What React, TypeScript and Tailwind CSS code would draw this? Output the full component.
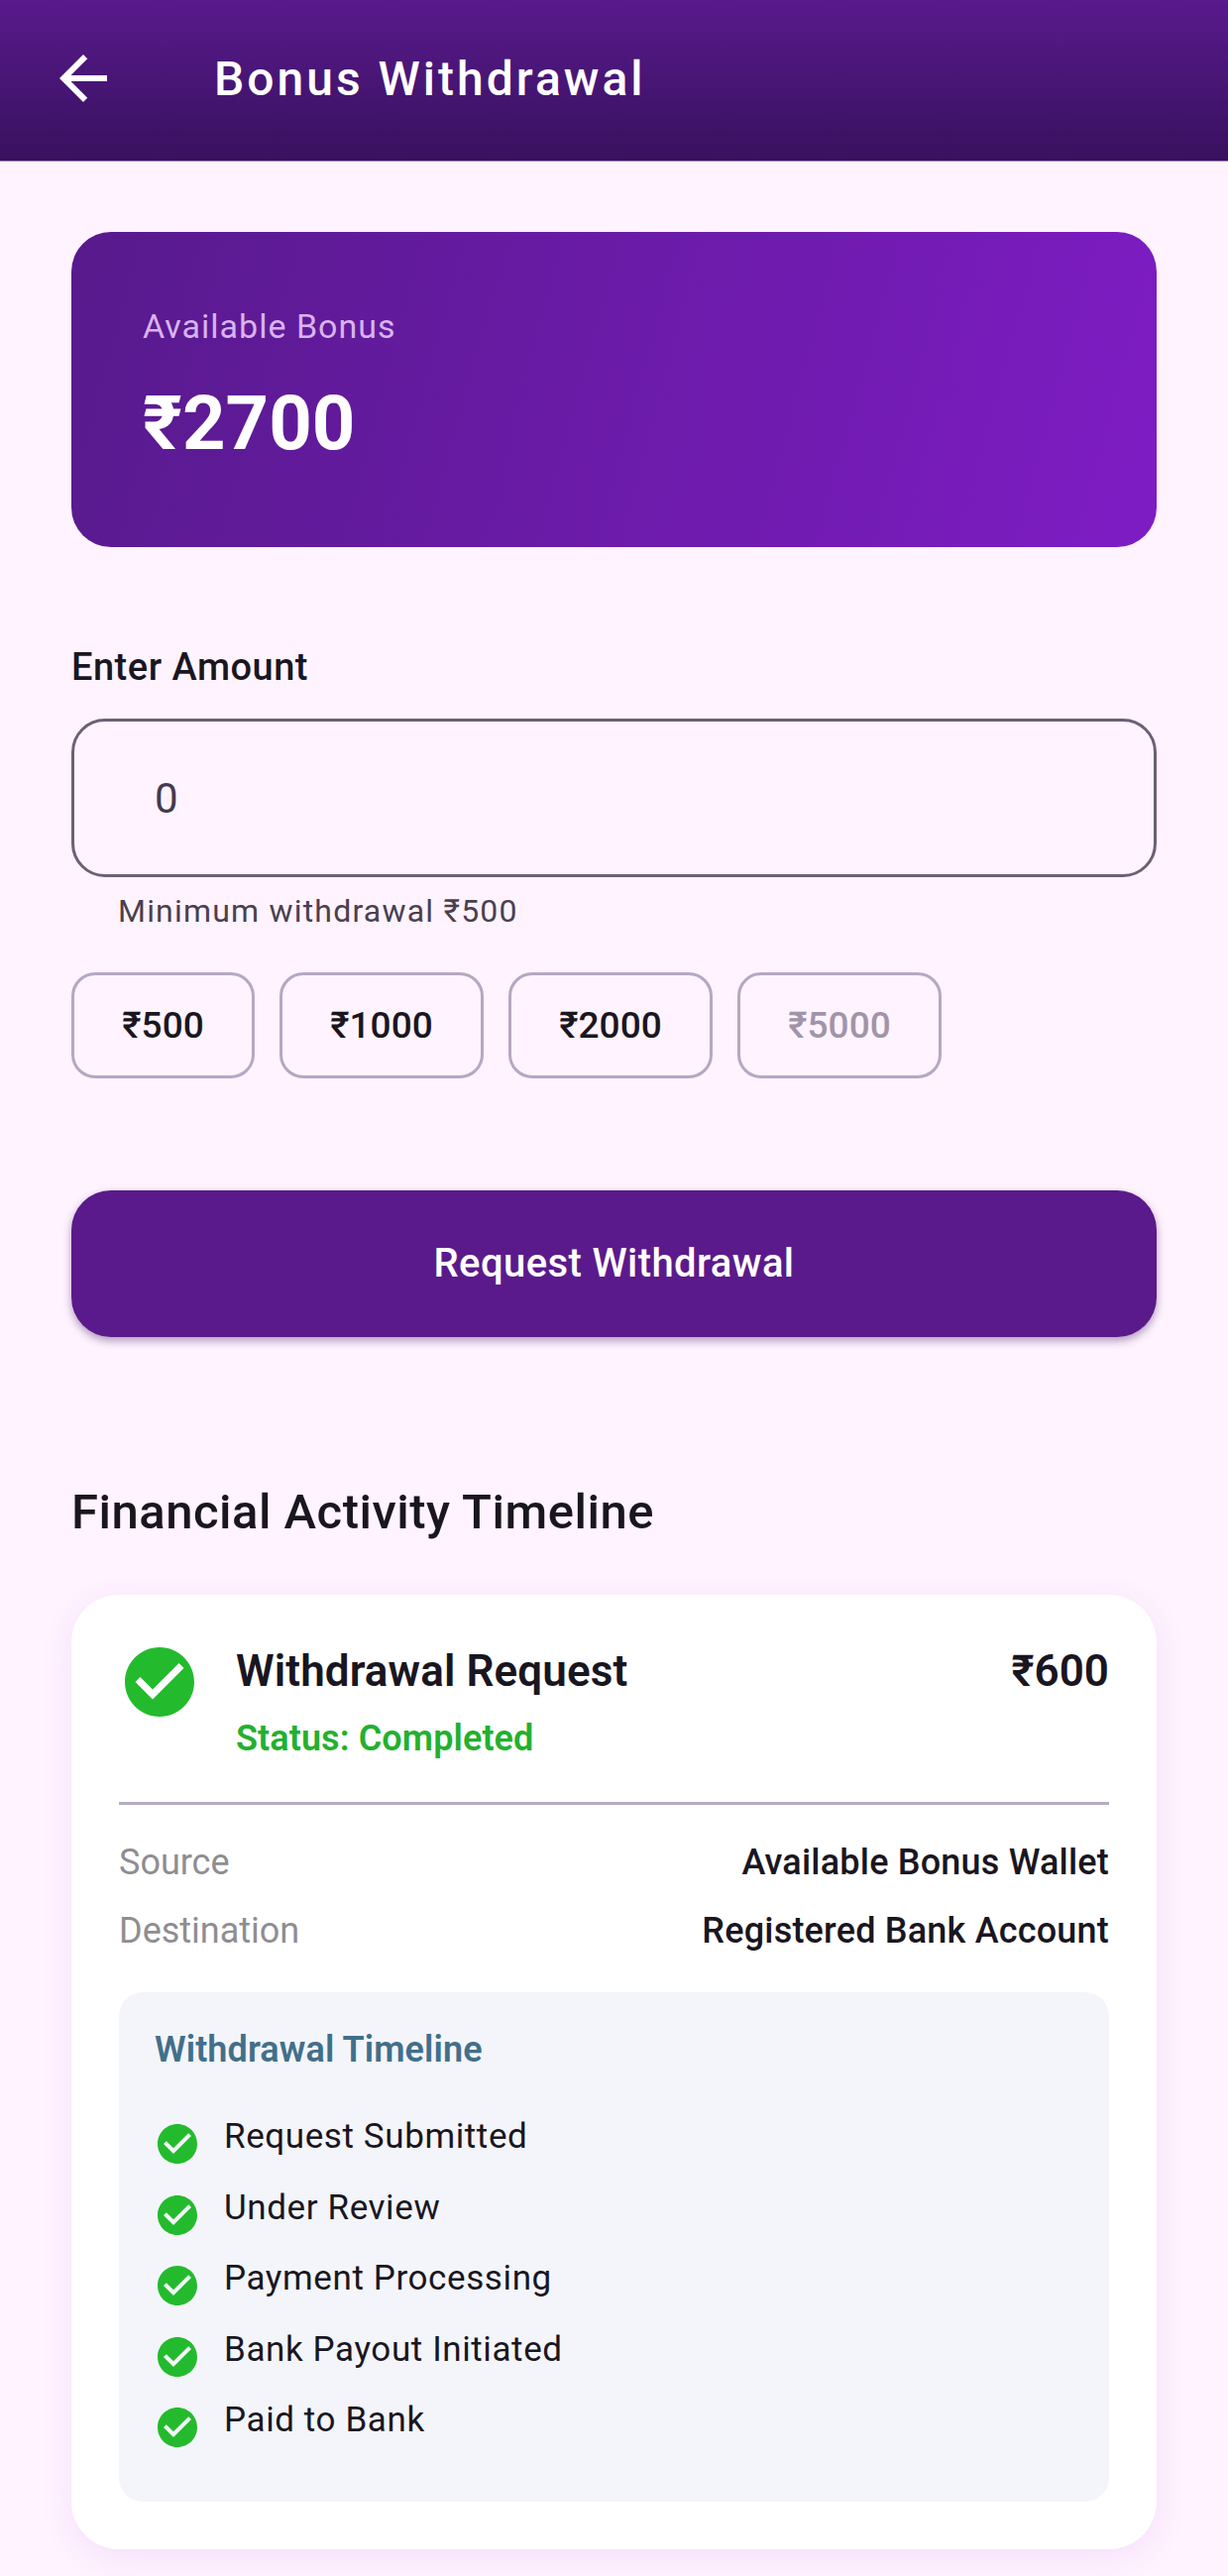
import React from "react";

const steps = [
  "Request Submitted",
  "Under Review",
  "Payment Processing",
  "Bank Payout Initiated",
  "Paid to Bank",
];

const CheckCircle: React.FC<{ className: string }> = ({ className }) => (
  <svg viewBox="2 2 20 20" className={className}>
    <path
      fill="#23bb2d"
      d="M12 2C6.48 2 2 6.48 2 12s4.48 10 10 10 10-4.48 10-10S17.52 2 12 2zm-2 15l-5-5 1.41-1.41L10 14.17l7.59-7.59L19 8l-9 9z"
    />
  </svg>
);

export default function App() {
  return (
    <div className="min-h-[2599px] bg-[#fff3ff] font-['Roboto',sans-serif] text-[#1a161f]">
      <header className="h-[163px] flex items-center pl-[48px] bg-gradient-to-b from-[#591a8c] to-[#38115f] border-b border-b-[#a47cbc]">
        <svg viewBox="0 0 24 24" className="w-[72px] h-[72px] -mt-[4px] fill-white">
          <path d="M20 11H7.83l5.59-5.59L12 4l-8 8 8 8 1.41-1.41L7.83 13H20v-2z" />
        </svg>
        <h1 className="ml-[96px] -mt-[2px] text-[48px] font-medium tracking-[3px] text-white">Bonus Withdrawal</h1>
      </header>

      <main className="px-[72px] pt-[71px]">
        <section className="h-[318px] rounded-[40px] px-[72px] pt-[73px] bg-[linear-gradient(105deg,#571a8c,#7e1cc4)]">
          <p className="text-[34px] leading-[44px] text-[#d9b3ef] tracking-[1px]">Available Bonus</p>
          <p className="mt-[31px] text-[76px] leading-[90px] font-bold text-white">₹2700</p>
        </section>

        <label className="block mt-[96px] text-[38px] leading-[50px] font-medium tracking-[0.5px]">Enter Amount</label>
        <div className="mt-[27px] h-[160px] rounded-[34px] border-[3px] border-[#6e5f76] flex items-center pl-[81px] text-[42px] text-[#453a4d]">
          0
        </div>
        <p className="mt-[14px] ml-[47px] text-[32px] leading-[40px] tracking-[1.2px] text-[#49404f]">Minimum withdrawal ₹500</p>

        <div className="mt-[42px] flex gap-[25px]">
          {["₹500", "₹1000", "₹2000", "₹5000"].map((a, i) => (
            <button
              key={a}
              className={`h-[107px] rounded-[24px] border-[3px] border-[#b8a6c2] text-[37px] font-medium ${
                i === 0 ? "w-[185px]" : "w-[206px]"
              } ${i === 3 ? "text-[#a194a9]" : ""}`}
            >
              {a}
            </button>
          ))}
        </div>

        <button className="mt-[113px] w-full h-[148px] rounded-[40px] bg-[#5b1a8b] text-white text-[40px] font-medium tracking-[0.4px] shadow-[0_4px_8px_rgba(60,20,90,0.4)]">
          Request Withdrawal
        </button>

        <h2 className="mt-[147px] text-[49px] leading-[60px] font-medium tracking-[0.5px]">Financial Activity Timeline</h2>

        <section className="mt-[53px] h-[963px] rounded-[48px] bg-white px-[48px] pt-[48px] shadow-[0_8px_32px_rgba(150,60,200,0.1)]">
          <div className="flex h-[161px]">
            <CheckCircle className="w-[70px] h-[70px] ml-[6px] mt-[5px]" />
            <div className="ml-[42px]">
              <p className="mt-[4px] text-[44px] leading-[50px] font-semibold tracking-[0.1px]">Withdrawal Request</p>
              <p className="mt-[21px] text-[36px] leading-[44px] font-semibold tracking-[0.1px] text-[#23b02e]">Status: Completed</p>
            </div>
            <p className="ml-auto mt-[4px] text-[44px] leading-[50px] font-semibold">₹600</p>
          </div>
          <div className="h-[3px] bg-[#b5adc0]" />

          <div className="mt-[36px] flex justify-between text-[36px] leading-[44px]">
            <span className="text-[#8f8d92]">Source</span>
            <span className="font-medium tracking-[0.2px]">Available Bonus Wallet</span>
          </div>
          <div className="mt-[25px] flex justify-between text-[36px] leading-[44px]">
            <span className="text-[#8f8d92]">Destination</span>
            <span className="font-medium tracking-[0.2px]">Registered Bank Account</span>
          </div>

          <div className="mt-[40px] h-[514px] rounded-[24px] bg-[#f3f5fa] px-[36px] pt-[36px]">
            <p className="text-[36px] leading-[44px] font-semibold tracking-[0.1px] text-[#426f8a]">Withdrawal Timeline</p>
            <ul className="mt-[44px] flex flex-col gap-[27.5px]">
              {steps.map((s) => (
                <li key={s} className="flex h-[44px]">
                  <CheckCircle className="w-[40px] h-[40px] mt-[9px] ml-[3px]" />
                  <span className="ml-[27px] text-[35px] leading-[44px] tracking-[0.6px]">{s}</span>
                </li>
              ))}
            </ul>
          </div>
        </section>
      </main>
    </div>
  );
}
